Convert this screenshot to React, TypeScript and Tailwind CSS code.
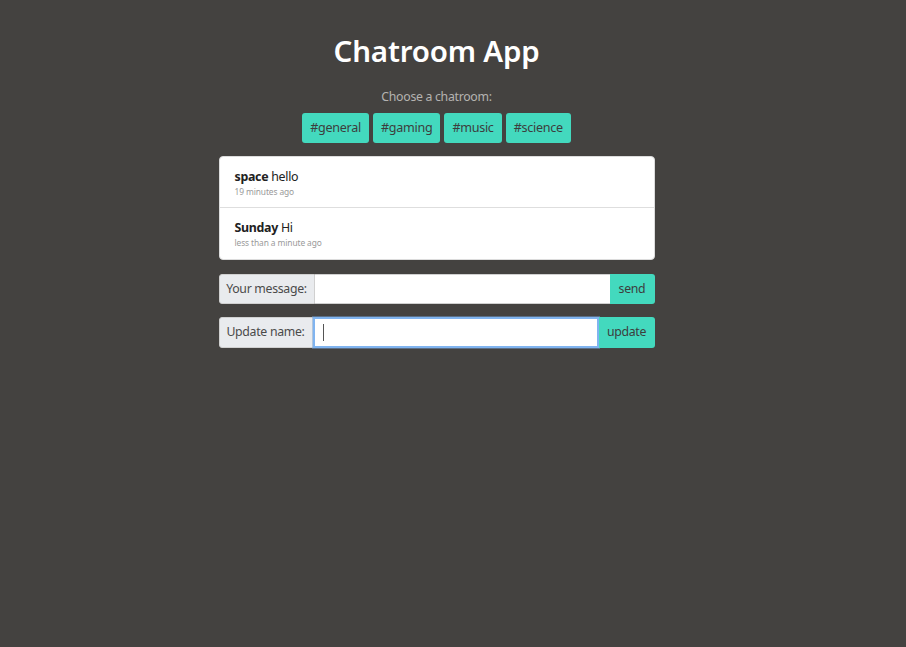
import React from "react";

export default function App() {
  const rooms = ["#general", "#gaming", "#music", "#science"];
  return (
    <div className="min-h-[647px] w-full bg-[#444240] pt-[31px] pr-[33px]" style={{ fontFamily: '"Noto Sans", "Open Sans", sans-serif' }}>
      <div className="mx-auto w-[436px]">
        <h1 className="text-center text-[29.5px] font-semibold leading-[40px] tracking-[-0.2px] text-white">Chatroom App</h1>
        <p className="mt-[17px] text-center text-[12.3px] leading-[18px] tracking-[-0.3px] text-[#b5b3b1]">Choose a chatroom:</p>
        <div className="mt-[7px] flex justify-center gap-[4px]">
          {rooms.map((r) => (
            <button key={r} className="h-[30px] rounded-[3px] bg-[#43d9be] px-[8px] text-[12.6px] tracking-[-0.3px] text-[#3d3d3d]">
              {r}
            </button>
          ))}
        </div>
        <div className="mt-[13px] rounded-[4px] border border-[#dcdcdc] bg-white">
          <div className="h-[51px] border-b border-[#dedede] px-[15px] pt-[11px]">
            <div className="text-[12.4px] leading-[17px] tracking-[-0.3px] text-[#212121]"><span className="font-bold">space</span> hello</div>
            <div className="mt-[1px] text-[8.4px] leading-[12px] tracking-[-0.1px] text-[#9a9a9a]">19 minutes ago</div>
          </div>
          <div className="h-[51px] px-[15px] pt-[11px]">
            <div className="text-[12.4px] leading-[17px] tracking-[-0.3px] text-[#212121]"><span className="font-bold">Sunday</span> Hi</div>
            <div className="mt-[1px] text-[8.4px] leading-[12px] tracking-[-0.1px] text-[#9a9a9a]">less than a minute ago</div>
          </div>
        </div>
        <div className="mt-[14px] flex h-[30px]">
          <div className="flex w-[96px] items-center justify-center rounded-l-[3px] border border-[#d0d0d0] bg-[#e9ebee] text-[12.3px] tracking-[-0.3px] text-[#4a4a4a]">Your message:</div>
          <input className="flex-1 border-y border-[#d0d0d0] bg-white px-2 outline-none" />
          <button className="w-[45px] rounded-r-[3px] bg-[#43d9be] text-[12.3px] tracking-[-0.3px] text-[#3d3d3d]">send</button>
        </div>
        <div className="mt-[13px] flex h-[31px]">
          <div className="flex w-[94px] items-center justify-center rounded-l-[3px] border border-[#d0d0d0] bg-[#e9ebee] text-[12.3px] tracking-[-0.3px] text-[#4a4a4a]">Update name:</div>
          <div className="flex flex-1 items-center border-2 border-[#80b4f0] bg-white px-[8px] shadow-[0_0_0_1px_rgba(128,180,240,0.4)]">
            <div className="h-[17px] w-[1px] bg-[#555]" />
          </div>
          <button className="w-[56px] rounded-r-[3px] bg-[#43d9be] text-[12.3px] tracking-[-0.3px] text-[#3d3d3d]">update</button>
        </div>
      </div>
    </div>
  );
}
